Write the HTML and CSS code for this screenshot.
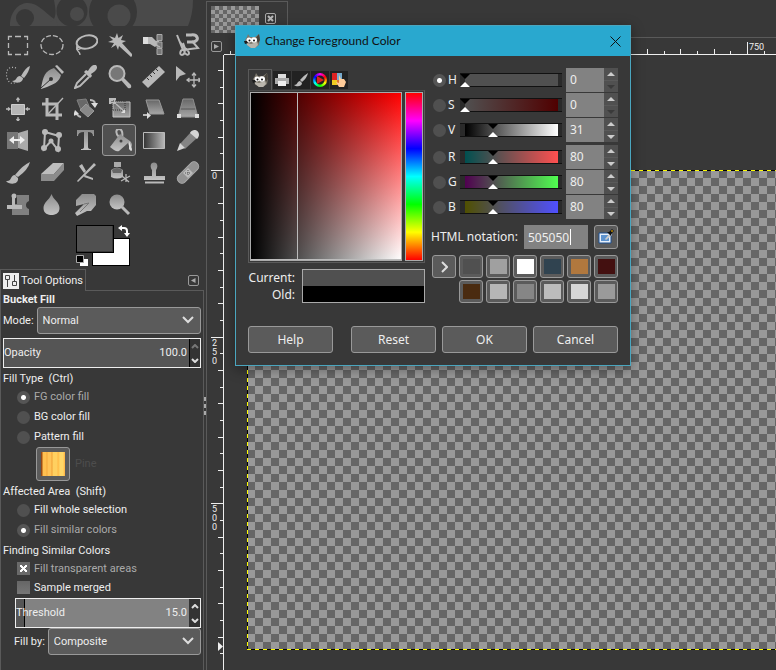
FILE: index.html
```html
<!DOCTYPE html>
<html lang="en">
<head>
    <meta charset="UTF-8">
    <meta name="viewport" content="width=device-width, initial-scale=1.0">
    <title>Image Editor</title>
    <link rel="stylesheet" href="styles.css">
</head>
<body>

<!-- shared gradients and symbols -->
<svg class="defs" width="0" height="0" aria-hidden="true">
    <defs>
        <linearGradient id="gv" x1="0" y1="0" x2="0" y2="1"><stop offset="0" stop-color="#8c8c8c"/><stop offset="1" stop-color="#c4c4c4"/></linearGradient>
        <linearGradient id="gd" x1="0" y1="0" x2="0" y2="1"><stop offset="0" stop-color="#676767"/><stop offset="1" stop-color="#a6a6a6"/></linearGradient>
        <linearGradient id="gh" x1="0" y1="0" x2="1" y2="0"><stop offset="0" stop-color="#333"/><stop offset="1" stop-color="#b8b8b8"/></linearGradient>
        <symbol id="wilber" viewBox="0 0 16 14">
            <path d="M1 6l2-3 1-3 2 3h5l4-3 1 6-1 5-4 3H7l-4-3z" fill="#7d786d"/>
            <path d="M12 4l3-4 1 6-2 3z" fill="#45423c"/>
            <path d="M3 9l4 1 6-2 1 3-3 3H7l-4-3z" fill="#b9b5ac"/>
            <ellipse cx="5" cy="6" rx="2.500" ry="2.500" fill="#fff"/><ellipse cx="10" cy="6" rx="3" ry="2.700" fill="#fff"/>
            <circle cx="5.500" cy="6.500" r="1" fill="#111"/><circle cx="10" cy="6.500" r="1" fill="#111"/>
            <path d="M0 7l3 0 1 2-3 1z" fill="#1c1c1c"/>
        </symbol>
    </defs>
</svg>

<aside class="dock">
    <svg class="banner" width="206" height="26" aria-hidden="true">
        <path d="M10 26C10 11 19 3 28 3c10 0 16 9 26 16 3-6 1-12 0-19h139q0 14-5 26z" fill="#4a4a4a"/>
        <circle cx="25" cy="18" r="9" fill="#383838"/>
        <path d="M50 22l6-3 2 7h-8z" fill="#4a4a4a"/>
        <circle cx="72" cy="11" r="15.500" fill="#383838"/><circle cx="77" cy="14" r="7" fill="#4a4a4a"/>
        <circle cx="113" cy="12" r="24" fill="#383838"/><circle cx="119" cy="16" r="11.500" fill="#4a4a4a"/>
    </svg>

    <div class="toolbox">
        <button class="tool" aria-label="Rectangle Select"><svg viewBox="0 0 24 24"><path d="M2.500 7V3.500H6M9 3.500h6M18 3.500h3.500V7M21.500 10v5M21.500 18v3.500H18M15 21.500H9M6 21.500H2.500V18M2.500 15v-5" class="l"/></svg></button>
        <button class="tool" aria-label="Ellipse Select"><svg viewBox="0 0 24 24"><ellipse cx="12" cy="12" rx="11" ry="9.500" class="l" fill="#303030" stroke-dasharray="5 2"/></svg></button>
        <button class="tool" aria-label="Free Select"><svg viewBox="0 0 24 24"><ellipse cx="13" cy="9" rx="10.500" ry="6.500" class="l2" transform="rotate(-12 13 9)"/><path d="M4 12c-3 3 0 5 2 4s-1-3-3-1 3 3 3 7" class="l"/></svg></button>
        <button class="tool" aria-label="Fuzzy Select"><svg viewBox="0 0 24 24"><path d="M9 0l1.500 5L15 2l-2 5 5 1-4 2 11 12-2 2-12-11-1 4-2-5-5 3 3-5-6-1 5-2-4-4 6 2z" class="f"/></svg></button>
        <button class="tool" aria-label="Select by Color"><svg viewBox="0 0 24 24"><path d="M1 4h9l4 4 3-1v4l-4 3-5-3H1z" class="f"/><path d="M1 4h5v7H1z" fill="#ddd"/><path d="M15 1.500h5v6h-5zM15 9h5v6h-5zM15 15.500h5v6h-5z" fill="#777" stroke="#aaa"/><path d="M10 10l8 4" class="l"/></svg></button>
        <button class="tool" aria-label="Scissors Select"><svg viewBox="0 0 24 24"><path d="M1 2l6 15L22 15l-6-7M8 17c-4-1-5 5-2 5s4-6 1-12M8 18c1 4 5 5 5 2s-6-5-9-11" class="l2"/><path d="M10 2h5c7-1 9 6 2 7h-6" class="l3"/></svg></button>

        <button class="tool" aria-label="Foreground Select"><svg viewBox="0 0 24 24"><path d="M10 3C2 0-1 7 1 13s7 7 9 3" class="l" stroke-dasharray="1 2"/><path d="M24 1q-4 1-9 10l3 2q5-6 6-12z" class="f"/><path d="M14 11c-4 0-3 5-8 5 4 3 11 2 11-3z" class="f"/></svg></button>
        <button class="tool" aria-label="Paths"><svg viewBox="0 0 24 24"><path d="M15 1l2-1 7 7-2 2z" class="f"/><path d="M14 3l7 7c-2 8-8 9-14 12l-6 2C3 11 5 6 14 3z" fill="url(#gv)"/><path d="M1 23l10-9" stroke="#333"/><circle cx="11" cy="14" r="2" fill="#333"/></svg></button>
        <button class="tool" aria-label="Color Picker"><svg viewBox="0 0 24 24"><path d="M12 9L3 18l-2 5 5-2 9-9" class="l2"/><path d="M10 7l2-2 2 1c2-4 5-7 8-6 3 3-1 7-5 9l1 2-2 2z" class="f"/></svg></button>
        <button class="tool" aria-label="Zoom"><svg viewBox="0 0 24 24"><path d="M13 15l2-3 8 8q1 4-3 3z" class="f"/><circle cx="9" cy="8.500" r="7.500" fill="#777" stroke="#b9b9b9" stroke-width="2"/></svg></button>
        <button class="tool" aria-label="Measure"><svg viewBox="0 0 24 24"><path d="M0 17L17 1l6 6L6 23z" class="f"/><path d="M5 13l2 2M8 10l2 2M11 7l2 2M14 4l2 2" stroke="#333"/></svg></button>
        <button class="tool" aria-label="Move"><svg viewBox="0 0 24 24"><path d="M0 1v15l4-5 6-2z" class="f"/><path d="M18 9v12M12 15h12M16 10.500l2-2.500 2 2.500M16 19.500l2 2.500 2-2.500M13.500 13L11 15l2.500 2M22.500 13l2 2-2 2" class="l"/></svg></button>

        <button class="tool" aria-label="Align"><svg viewBox="0 0 24 24"><path d="M5.500 7.500h13v10h-13z" fill="#b5b5b5" stroke="#ccc"/><path d="M12 1v4M12 20v4M0 12h4M20 12h4M10.500 3L12 1l1.500 2M10.500 22l1.500 2 1.500-2M2 10.500L4 12l-2 1.500M22 10.500L20 12l2 1.500" class="l"/></svg></button>
        <button class="tool" aria-label="Crop"><svg viewBox="0 0 24 24"><path d="M7 1v17h15M2 7h15v16" class="l3"/><path d="M8 17L23 1" class="l"/></svg></button>
        <button class="tool" aria-label="Rotate"><svg viewBox="0 0 24 24"><path d="M3 3l9-1 3 7-8 4z" fill="#686868" stroke="#808080"/><path d="M12 7l8 7-6 6-8-7z" fill="#888" stroke="#999"/><path d="M16 3q4 0 5 3M2 15q1 4 5 5" class="l2"/><path d="M17 6h7l-3 5zM-1 19l2-6 4 4z" fill="#ddd"/></svg></button>
        <button class="tool" aria-label="Scale"><svg viewBox="0 0 24 24"><path d="M5 5h17v15H5z" fill="url(#gd)" stroke="#c4c4c4"/><path d="M1 1h7v6H1z" fill="#bbb"/><path d="M4 13V4h13v9z" stroke="#333" stroke-dasharray="1 1" fill="none"/><path d="M8 7l9 8" class="l"/><path d="M17 12v4h-4z" fill="#ddd"/></svg></button>
        <button class="tool" aria-label="Shear"><svg viewBox="0 0 24 24"><path d="M4 3h13l5 14H8z" fill="url(#gd)" stroke="#999"/><path d="M1 18h6" class="l2"/><path d="M5 15v7l4-3.500z" fill="#ddd"/></svg></button>
        <button class="tool" aria-label="Perspective"><svg viewBox="0 0 24 24"><path d="M7 2h10l5 18H2z" fill="url(#gd)" stroke="#8d8d8d"/><path d="M5 12h14" stroke="#555"/><path d="M1 17h4v4H1zM19 17h4v4h-4z" fill="#ddd"/></svg></button>

        <button class="tool" aria-label="Flip"><svg viewBox="0 0 24 24"><path d="M1 3h11v17H1z" fill="#777"/><path d="M12 4l10-3v21l-10-3z" fill="#aaa"/><path d="M3 11l5-4v3h6V7l5 4-5 4v-3H8v3z" fill="#eee"/></svg></button>
        <button class="tool" aria-label="Cage Transform"><svg viewBox="0 0 24 24"><path d="M5 3l14 4-1 14-7-9-7 8z" class="l2"/><g class="f"><circle cx="5" cy="3" r="3"/><circle cx="19" cy="6" r="3"/><circle cx="18" cy="20" r="3"/><circle cx="11" cy="12" r="2.500"/><circle cx="4" cy="19" r="3"/></g></svg></button>
        <button class="tool" aria-label="Text"><svg viewBox="0 0 24 24"><path d="M3 1h17v6h-1q0-4-5-4v15q0 2 3 2v1H7v-1q3 0 3-2V3Q4 3 4 7H3z" fill="url(#gv)"/></svg></button>
        <button class="tool active" aria-label="Bucket Fill"><svg viewBox="0 0 24 24"><path d="M11 8c-4-4-3-8 0-8s4 4 3 9" class="l2"/><path d="M2 18L12 5l10 7c3 3 2 6 0 8l-2-6-9 8q-2 1-5-1z" fill="url(#gv)"/><path d="M21 12v8q3 4 3 0z" fill="#ddd"/><circle cx="13" cy="12" r="1.500" fill="#444"/></svg></button>
        <button class="tool" aria-label="Gradient"><svg viewBox="0 0 24 24"><path d="M1.500 3.500h21v16h-21z" fill="url(#gh)" stroke="#bbb"/></svg></button>
        <button class="tool" aria-label="Pencil"><svg viewBox="0 0 24 24"><path d="M4 15L15 3l6 6L9 20z" fill="#858585"/><path d="M4 14L1 22l8-3zM14 4c4-7 13 0 7 6z" fill="#d4d4d4"/></svg></button>

        <button class="tool" aria-label="Paintbrush"><svg viewBox="0 0 24 24"><path d="M24 1Q17 4 9 14l3 2Q22 9 24 1z" class="f"/><path d="M9 14c-5 0-3 7-9 6 3 4 13 4 12-3z" class="f"/></svg></button>
        <button class="tool" aria-label="Eraser"><svg viewBox="0 0 24 24"><path d="M1 13L13 2h11L14 13z" fill="#bdbdbd"/><path d="M1 13h13v7H1zM14 13L24 2v7L14 20z" fill="#8b8b8b"/></svg></button>
        <button class="tool" aria-label="Airbrush"><svg viewBox="0 0 24 24"><path d="M3 20L20 2l2 2L4 21zM5 5l3-2 4 7-2 2zM11 14l8 3v2l-9-3z" class="f"/></svg></button>
        <button class="tool" aria-label="Ink"><svg viewBox="0 0 24 24"><path d="M6 1h7v5H6z" fill="#aaa"/><path d="M3 9q6-5 12 0v7q-6 3-12 0z" fill="url(#gv)"/><path d="M4 9q5-4 10 0l-1 3H5z" fill="#666"/><path d="M13 20l9-5M14 15l7 6M18 13v8" class="l"/></svg></button>
        <button class="tool" aria-label="Clone"><svg viewBox="0 0 24 24"><path d="M10 9C4-1 20-1 14 9v6h9v4H2v-4h8z" fill="url(#gv)"/><path d="M3 21.500h19" class="l2"/></svg></button>
        <button class="tool" aria-label="Heal"><svg viewBox="0 0 24 24"><rect x="-1" y="7" width="26" height="9" rx="4" fill="#929292" stroke="#aaa" transform="rotate(-45 12 11.500)"/><path d="M12 7l5 5-5 5-5-5z" fill="#bbb"/><path d="M12 9v6M9 12h6" stroke="#555" stroke-dasharray="1 1"/></svg></button>

        <button class="tool" aria-label="Perspective Clone"><svg viewBox="0 0 24 24"><path d="M11 2h12v6q-3 1-3 4t3 4v6H6V11h5z" fill="#808080"/><path d="M6 3h3v9h7v4H1v-4h5z" class="f"/><circle cx="8" cy="3" r="2.500" class="f"/></svg></button>
        <button class="tool" aria-label="Blur"><svg viewBox="0 0 24 24"><path d="M11.500 1c2 6 8 8 8 14s-5 7-8 7-8-1-8-7 6-8 8-14z" fill="url(#gv)"/></svg></button>
        <button class="tool" aria-label="Smudge"><svg viewBox="0 0 24 24"><path d="M2 7l6-6h12l2 2v9l-5 6h-4L3 23l-2-3 9-9-8 2z" fill="url(#gv)"/><path d="M10 11l5-1-9 9" stroke="#777" fill="none"/></svg></button>
        <button class="tool" aria-label="Dodge / Burn"><svg viewBox="0 0 24 24"><circle cx="9" cy="9" r="7.500" fill="url(#gv)"/><path d="M14 14l7 7" class="l3"/></svg></button>
    </div>

    <div class="colors">
        <button class="swatch bg" aria-label="Background color"></button>
        <button class="swatch fg" aria-label="Foreground color"></button>
        <svg class="swap" width="12" height="12" viewBox="0 0 12 12"><path d="M3 3h3q3 0 3 3v2" fill="none" stroke="#fff" stroke-width="2"/><path d="M4 0v6L0 3zM6 8h6l-3 4z" fill="#fff"/></svg>
        <svg class="reset" width="12" height="12" viewBox="0 0 12 12"><path d="M4 4h8v7H4z" fill="#fff"/><path d="M.5.500h7v7h-7z" fill="#000" stroke="#aaa"/></svg>
    </div>

    <div class="tab-row">
        <button class="tab">
            <svg width="16" height="16" viewBox="0 0 16 16"><path d="M0 0h16v16H0z" fill="#eee"/><path d="M2.500 2.500h4v4h-4zM9.500 8.500h4v4h-4zM4.500 7v7M11.500 2v6" fill="none" stroke="#444"/></svg>
            Tool Options
        </button>
        <button class="tab-menu" aria-label="Configure this tab"><svg width="11" height="11" viewBox="0 0 11 11"><rect x=".5" y=".5" width="10" height="10" rx="1.500" fill="none" stroke="#999"/><path d="M7.500 3v5L3 5.500z" fill="#aaa"/></svg></button>
    </div>

    <form class="options">
        <h2>Bucket Fill</h2>
        <div class="row">
            <label for="mode">Mode:</label>
            <div class="select">
                <select id="mode"><option>Normal</option></select>
                <svg width="12" height="8" viewBox="0 0 12 8"><path d="M1 1l5 5 5-5" class="chev"/></svg>
            </div>
        </div>
        <div class="scale opacity">
            <label for="opacity">Opacity</label>
            <input id="opacity" type="text" value="100.0">
            <div class="steps">
                <button type="button" aria-label="Increase" disabled><svg width="8" height="5" viewBox="0 0 8 5"><path d="M1 4l3-3 3 3" class="chev"/></svg></button>
                <button type="button" aria-label="Decrease"><svg width="8" height="5" viewBox="0 0 8 5"><path d="M1 1l3 3 3-3" class="chev"/></svg></button>
            </div>
        </div>

        <h3>Fill Type&nbsp; (Ctrl)</h3>
        <label class="choice on"><input type="radio" name="fill" checked>FG color fill</label>
        <label class="choice"><input type="radio" name="fill">BG color fill</label>
        <label class="choice"><input type="radio" name="fill">Pattern fill</label>
        <div class="pattern">
            <button type="button" aria-label="Pattern"><span class="pine"></span></button>
            <span>Pine</span>
        </div>

        <h3>Affected Area&nbsp; (Shift)</h3>
        <label class="choice"><input type="radio" name="area">Fill whole selection</label>
        <label class="choice on"><input type="radio" name="area" checked>Fill similar colors</label>

        <h3 class="finding">Finding Similar Colors</h3>
        <label class="choice check on"><input type="checkbox" checked>Fill transparent areas</label>
        <label class="choice check"><input type="checkbox">Sample merged</label>
        <div class="scale threshold">
            <label for="threshold">Threshold</label>
            <input id="threshold" type="text" value="15.0">
            <div class="steps">
                <button type="button" aria-label="Increase"><svg width="8" height="5" viewBox="0 0 8 5"><path d="M1 4l3-3 3 3" class="chev"/></svg></button>
                <button type="button" aria-label="Decrease"><svg width="8" height="5" viewBox="0 0 8 5"><path d="M1 1l3 3 3-3" class="chev"/></svg></button>
            </div>
        </div>
        <div class="row fill-by">
            <label for="fillby">Fill by:</label>
            <div class="select">
                <select id="fillby"><option>Composite</option></select>
                <svg width="12" height="8" viewBox="0 0 12 8"><path d="M1 1l5 5 5-5" class="chev"/></svg>
            </div>
        </div>
    </form>
    <div class="grip"><i></i><i></i><i></i></div>
</aside>

<main class="window">
    <div class="image-tabs">
        <div class="image-tab">
            <div class="thumb"></div>
            <button aria-label="Close image"><svg width="11" height="11" viewBox="0 0 11 11"><rect x=".5" y=".5" width="10" height="10" rx="1.500" fill="none" stroke="#aaa"/><path d="M3 3l5 5M8 3L3 8" stroke="#bbb" stroke-width="2"/></svg></button>
        </div>
    </div>
    <div class="workspace">
        <button class="corner" aria-label="Image menu"><svg width="11" height="11" viewBox="0 0 11 11"><rect x=".5" y=".5" width="10" height="10" rx="1.500" fill="none" stroke="#999"/><path d="M3 3v5l5-2.500z" fill="#aaa"/></svg></button>
        <svg class="ruler-h" id="rulerH"></svg>
        <svg class="ruler-v" id="rulerV"></svg>
        <div class="view"><div class="canvas"></div></div>
    </div>
</main>

<section class="dialog" role="dialog" aria-labelledby="dialogTitle">
    <header>
        <svg width="16" height="14"><use href="#wilber"/></svg>
        <h1 id="dialogTitle">Change Foreground Color</h1>
        <button aria-label="Close"><svg width="11" height="11" viewBox="0 0 11 11"><path d="M.5.500l10 10M10.500.500l-10 10" stroke="#111"/></svg></button>
    </header>
    <div class="dialog-body">
        <div class="picker">
            <div class="picker-tabs">
                <button class="current" aria-label="GIMP"><svg width="16" height="14"><use href="#wilber"/></svg></button>
                <button aria-label="CMYK"><svg width="14" height="14" viewBox="0 0 14 14"><path d="M3 1h8v4H3z" fill="#ddd"/><path d="M0 5h14v6H0z" fill="#aaa"/><path d="M3 8h8v5H3z" fill="#eee"/></svg></button>
                <button aria-label="Watercolor"><svg width="14" height="14" viewBox="0 0 14 14"><path d="M14 0Q9 3 6 7l2 2q5-4 6-9zM6 8c-3 0-2 4-6 4 2 2 8 2 8-2z" fill="#bbb"/></svg></button>
                <button aria-label="Wheel"><span class="wheel"><svg width="8" height="8" viewBox="0 0 8 8"><path d="M1 0v8l7-4z" fill="#d22"/></svg></span></button>
                <button aria-label="Palette"><svg width="14" height="14" viewBox="0 0 14 14"><path d="M0 0h5v7H0z" fill="#d22"/><path d="M5 0h5v7H5z" fill="#7ac"/><path d="M0 7h5v5H0z" fill="#ec2"/><path d="M5 7h5v5H5z" fill="#d73"/><path d="M7 2l2 4 3 0 2 3-2 5H7L4 9l3 1z" fill="#fc9"/></svg></button>
            </div>
            <div class="picker-page">
                <div class="sv"></div>
                <div class="hue"></div>
            </div>
            <div class="compare">
                <div class="compare-labels"><span>Current:</span><span>Old:</span></div>
                <div class="compare-box"></div>
            </div>
        </div>

        <div class="channels">
            <div class="channel h at-0"><label><input type="radio" name="ch" checked>H</label><div class="slider"><span class="bar"></span></div><div class="spin"><input type="text" value="0" aria-label="H"><button aria-label="Up"></button><button disabled aria-label="Down"></button></div></div>
            <div class="channel s at-0"><label><input type="radio" name="ch">S</label><div class="slider"><span class="bar"></span></div><div class="spin"><input type="text" value="0" aria-label="S"><button aria-label="Up"></button><button disabled aria-label="Down"></button></div></div>
            <div class="channel v"><label><input type="radio" name="ch">V</label><div class="slider"><span class="bar"></span></div><div class="spin"><input type="text" value="31" aria-label="V"><button aria-label="Up"></button><button aria-label="Down"></button></div></div>
            <div class="channel r"><label><input type="radio" name="ch">R</label><div class="slider"><span class="bar"></span></div><div class="spin"><input type="text" value="80" aria-label="R"><button aria-label="Up"></button><button aria-label="Down"></button></div></div>
            <div class="channel g"><label><input type="radio" name="ch">G</label><div class="slider"><span class="bar"></span></div><div class="spin"><input type="text" value="80" aria-label="G"><button aria-label="Up"></button><button aria-label="Down"></button></div></div>
            <div class="channel b"><label><input type="radio" name="ch">B</label><div class="slider"><span class="bar"></span></div><div class="spin"><input type="text" value="80" aria-label="B"><button aria-label="Up"></button><button aria-label="Down"></button></div></div>

            <div class="html-row">
                <label for="hex">HTML notation:</label>
                <div class="hex"><input id="hex" type="text" value="505050" size="6"></div>
                <button class="btn" aria-label="Pick color"><svg width="16" height="16" viewBox="0 0 16 16"><path d="M1 4h12v10H1z" fill="#e8f0fa" stroke="#1b4f91"/><path d="M3 6h8v6H3z" fill="#5d93cf"/><path d="M7 10l5-6 2 2-6 5z" fill="#ccc"/><path d="M9 3h2l3-3 2 2-3 3v2z" fill="#111"/><circle cx="14" cy="2" r="1" fill="#b80"/></svg></button>
            </div>

            <div class="history">
                <button class="btn" aria-label="Add color"><svg width="7" height="12" viewBox="0 0 7 12"><path d="M1 1l5 5-5 5" class="chev"/></svg></button>
                <button class="btn c1" aria-label="#505050"><i></i></button>
                <button class="btn c2" aria-label="#a0a0a0"><i></i></button>
                <button class="btn c3" aria-label="#ffffff"><i></i></button>
                <button class="btn c4" aria-label="#304350"><i></i></button>
                <button class="btn c5" aria-label="#b1783e"><i></i></button>
                <button class="btn c6" aria-label="#431010"><i></i></button>
                <button class="btn c7" aria-label="#4a2b10"><i></i></button>
                <button class="btn c8" aria-label="#b6b6b6"><i></i></button>
                <button class="btn c9" aria-label="#868686"><i></i></button>
                <button class="btn c10" aria-label="#bcbcbc"><i></i></button>
                <button class="btn c11" aria-label="#d6d6d6"><i></i></button>
                <button class="btn c12" aria-label="#9a9a9a"><i></i></button>
            </div>
        </div>
    </div>
    <footer>
        <button class="btn help">Help</button>
        <button class="btn">Reset</button>
        <button class="btn">OK</button>
        <button class="btn">Cancel</button>
    </footer>
</section>

<script>
// one tick every 25 image pixels, a labelled one every 250
const zoom = 2 / 3;

function add(svg, name, attrs, text) {
    const el = document.createElementNS("http://www.w3.org/2000/svg", name);
    for (const key in attrs) el.setAttribute(key, attrs[key]);
    if (text) el.textContent = text;
    svg.appendChild(el);
}

function drawRuler(id, origin, size, vertical) {
    const svg = document.getElementById(id);
    const box = svg.getBoundingClientRect();
    const end = vertical ? box.height : box.width;
    for (let i = -6; ; i++) {
        const pos = Math.round(origin + i * 25 * zoom);
        if (pos < 0) continue;
        if (pos > end) break;
        const major = i % 10 === 0;
        const len = major ? 12 : i % 2 === 0 ? 5 : 3;
        if (vertical) {
            add(svg, "rect", { x: size - len, y: pos, width: len, height: 1 });
        } else {
            add(svg, "rect", { x: pos, y: size - len, width: 1, height: len });
        }
        if (!major || pos > end - 24) continue;
        const label = String(i * 25);
        if (vertical) {
            [...label].forEach((c, n) => add(svg, "text", { x: 2, y: pos + 9 + n * 9 }, c));
        } else {
            add(svg, "text", { x: pos + 2, y: 9 }, label);
        }
    }
    if (vertical) {
        add(svg, "path", { d: "M" + (size - 5) + " 587l5 4.500-5 4.500z" });
    }
}

drawRuler("rulerH", 20, 13, false);
drawRuler("rulerV", 115, 13, true);
</script>

</body>
</html>
```

FILE: styles.css
```css
* {
    box-sizing: border-box;
}
body {
    margin: 0;
    display: flex;
    height: 100vh;
    overflow: hidden;
    background: #383838;
    color: #eee;
    font-family: Roboto, sans-serif;
    font-size: 11px;
    line-height: 16px;
}
button, input, select {
    margin: 0;
    padding: 0;
    border: none;
    background: none;
    color: inherit;
    font: inherit;
}
h1, h2, h3 {
    margin: 0;
    font-size: 11px;
    font-weight: normal;
}
svg {
    display: block;
}
.defs {
    position: absolute;
}
.chev {
    fill: none;
    stroke: #ddd;
    stroke-width: 2;
}

/* dock */
.dock {
    position: relative;
    flex: none;
    display: flex;
    flex-direction: column;
    width: 206px;
}
.banner {
    flex: none;
}
.toolbox {
    display: grid;
    grid-template-columns: repeat(6, 34px);
    grid-auto-rows: 32px;
    margin-top: 2px;
}
.tool {
    display: flex;
    align-items: center;
    justify-content: center;
    padding: 2px 0 0 2px;
    border: 1px solid transparent;
    border-radius: 3px;
}
.tool svg {
    width: 24px;
    height: 24px;
}
.tool.active {
    border-color: #999;
    background: #505050;
}
.l, .l2, .l3 {
    fill: none;
    stroke: #b9b9b9;
    stroke-width: 1.3;
}
.l2 {
    stroke-width: 2;
}
.l3 {
    stroke-width: 3;
}
.f {
    fill: #b9b9b9;
}
.colors {
    position: relative;
    width: 54px;
    height: 42px;
    margin: 5px 0 2px 76px;
}
.swatch, .swap, .reset {
    position: absolute;
}
.swatch {
    width: 38px;
    height: 28px;
    border: 1px solid #000;
}
.fg {
    left: 0;
    top: 0;
    background: #505050;
    box-shadow: inset -1px -1px #383838;
}
.bg {
    right: 0;
    bottom: 1px;
    background: #fff;
}
.swap {
    right: 0;
    top: 0;
}
.reset {
    left: 0;
    bottom: 0;
}
.tab-row {
    display: flex;
    justify-content: space-between;
    align-items: center;
    height: 22px;
    margin: 0 2px 0 0;
    background: linear-gradient(#5a5a5a, #5a5a5a) bottom / 100% 1px no-repeat;
}
.tab {
    display: flex;
    align-items: center;
    gap: 2px;
    width: 86px;
    height: 22px;
    padding-left: 2px;
    border: 1px solid #5a5a5a;
    border-bottom: none;
    background: #383838;
    white-space: nowrap;
}
.tab-menu {
    margin-right: 5px;
}
.options {
    flex: 1;
    display: flex;
    flex-direction: column;
    margin-right: 2px;
    padding: 2px 2px 0;
    border: 1px solid #5a5a5a;
    border-width: 0 1px;
}
.options h2 {
    font-weight: bold;
    line-height: 14px;
}
.row {
    display: flex;
    align-items: center;
    gap: 3px;
}
.select {
    position: relative;
    flex: 1;
}
.select select {
    appearance: none;
    width: 100%;
    height: 27px;
    padding: 0 5px;
    border: 1px solid #999;
    border-radius: 3px;
    background: #5b5b5b;
}
.select svg {
    position: absolute;
    right: 7px;
    top: 9px;
    pointer-events: none;
}
.scale {
    display: flex;
    align-items: center;
    height: 30px;
    border: 1px solid #eee;
    background: #555;
}
.scale input {
    flex: 1;
    min-width: 0;
    text-align: right;
    padding-right: 2px;
}
.steps {
    display: flex;
    flex-direction: column;
    align-self: stretch;
    width: 11px;
    background: #333;
}
.steps button {
    flex: 1;
    display: flex;
    align-items: center;
    justify-content: center;
}
.steps button:disabled {
    opacity: 0.4;
}
.opacity {
    margin: 4px 0 3px;
}
.opacity .steps {
    border-left: 1px solid #000;
}
.threshold {
    margin: 1px 0 0 12px;
    background: linear-gradient(to right, #555 8px, #000 8px 9px, #828282 9px);
}
.options h3 {
    line-height: 16px;
}
.options .finding {
    margin-top: 3px;
}
.choice {
    display: flex;
    align-items: center;
    gap: 4px;
    height: 20px;
    padding-left: 14px;
}
.choice.check {
    height: 19px;
}
.choice.on {
    color: #aaa;
}
input[type=radio] {
    appearance: none;
    width: 13px;
    height: 13px;
    border-radius: 50%;
    background: #505050;
}
input[type=radio]:checked {
    background: radial-gradient(circle, #fff 2px, #555 3px);
}
input[type=checkbox] {
    appearance: none;
    width: 13px;
    height: 13px;
    background: linear-gradient(#666, #777);
}
input[type=checkbox]:checked {
    background:
        linear-gradient(45deg, transparent 42%, #fff 42% 58%, transparent 58%) center / 7px 7px no-repeat,
        linear-gradient(-45deg, transparent 42%, #fff 42% 58%, transparent 58%) center / 7px 7px no-repeat,
        #6a6a6a;
}
.pattern {
    display: flex;
    align-items: center;
    gap: 5px;
    padding-left: 33px;
    margin-bottom: 3px;
    color: #4d4d4d;
}
.pattern button {
    width: 34px;
    height: 34px;
    padding: 4px;
    border: 1px solid #999;
    border-radius: 3px;
    background: #5b5b5b;
}
.pine {
    display: block;
    height: 24px;
    background: linear-gradient(to right, #9a4a14 1px, #ffc050 2px 5px, #f5a83a 6px, #ffc458 7px 10px, #ef9f35 11px, #ffd060 12px 16px, #ffb945 17px, #ffd768 19px 22px, #ffb040);
}
.fill-by {
    padding-left: 11px;
}
.grip {
    position: absolute;
    right: 0;
    top: 397px;
    display: grid;
    gap: 3px;
}
.grip i {
    width: 2px;
    height: 4px;
    background: #aaa;
}

/* image window */
.window {
    flex: 1;
    min-width: 0;
    display: flex;
    flex-direction: column;
    margin-top: 1px;
    border-left: 1px solid #5a5a5a;
}
.image-tabs {
    height: 37px;
    background: linear-gradient(#5a5a5a, #5a5a5a) bottom / 100% 1px no-repeat;
}
.image-tab {
    display: flex;
    gap: 6px;
    width: 81px;
    height: 37px;
    padding: 4px;
    border: 1px solid #5a5a5a;
    border-width: 1px 1px 0 0;
    background: #383838;
}
.image-tab button {
    height: 11px;
    margin-top: 7px;
}
.thumb {
    width: 48px;
    height: 27px;
    background: repeating-conic-gradient(#999 0 25%, #666 0 50%) 0 0 / 8px 8px;
}
.workspace {
    flex: 1;
    min-height: 0;
    display: grid;
    grid-template-columns: 17px 1fr;
    grid-template-rows: 17px 1fr;
}
.corner {
    padding: 3px 2px 3px 4px;
}
.ruler-h {
    width: 100%;
    height: 14px;
    margin-top: 3px;
    padding-left: 3px;
    border-bottom: 1px solid #eee;
}
.ruler-v {
    width: 14px;
    height: 100%;
    margin-left: 3px;
    border-right: 1px solid #eee;
}
.ruler-h, .ruler-v {
    fill: #eee;
    font-size: 9px;
    line-height: 9px;
    overflow: hidden;
}
.view {
    padding: 115px 0 20px 23px;
}
.canvas {
    height: 100%;
    background:
        repeating-linear-gradient(to right, #ff0 0 4px, #000 4px 8px) top / 100% 1px no-repeat,
        repeating-linear-gradient(to right, #ff0 0 4px, #000 4px 8px) bottom / 100% 1px no-repeat,
        repeating-linear-gradient(#ff0 0 4px, #000 4px 8px) left / 1px 100% no-repeat,
        repeating-conic-gradient(#666 0 25%, #999 0 50%) 0 0 / 16px 16px;
}

/* color dialog */
.dialog {
    position: absolute;
    left: 235px;
    top: 25px;
    width: 396px;
    border: 1px solid #4aa6bf;
    background: #383838;
    box-shadow: 0 3px 12px rgba(0, 0, 0, 0.4);
    font-family: "Noto Sans", sans-serif;
    font-size: 12px;
}
.dialog header {
    display: flex;
    align-items: center;
    gap: 5px;
    height: 30px;
    padding: 0 9px 0 8px;
    background: #29a8cf;
    color: #111;
}
.dialog h1 {
    flex: 1;
    font-family: Lato, sans-serif;
    font-size: 12px;
}
.dialog-body {
    display: flex;
    gap: 6px;
    padding: 12px 12px 0;
}
.picker {
    width: 177px;
}
.picker-tabs {
    display: flex;
    align-items: flex-end;
    gap: 1px;
    height: 22px;
}
.picker-tabs button {
    display: flex;
    align-items: center;
    justify-content: center;
    width: 18px;
    height: 18px;
    margin-bottom: 1px;
    background: #222;
}
.picker-tabs .current {
    width: 24px;
    height: 21px;
    margin: 0;
    border: 1px solid #5a5a5a;
    border-bottom: none;
    background: #383838;
}
.wheel {
    display: flex;
    padding: 3px;
    border-radius: 50%;
    background:
        radial-gradient(circle, #222 4px, transparent 5px),
        conic-gradient(#f0f, #f00, #ff0, #0f0, #0ff, #00f, #f0f);
}
.picker-page {
    display: flex;
    gap: 3px;
    height: 173px;
    padding: 1px;
    border: 1px solid #5a5a5a;
    border-top-color: #4a4a4a;
}
.sv {
    flex: 1;
    border: 1px solid #aaa;
    background:
        linear-gradient(#bbb, #bbb) 46px 0 / 1px 100% no-repeat,
        linear-gradient(#bbb, #bbb) 0 100% / 100% 1px no-repeat,
        linear-gradient(to right, #000, transparent),
        linear-gradient(#f00, #fff);
}
.hue {
    width: 18px;
    border: 1px solid #aaa;
    background: linear-gradient(#f00, #f0f, #00f, #0ff, #0f0, #ff0, #f00);
}
.compare {
    display: flex;
    gap: 7px;
    margin-top: 6px;
}
.compare-labels {
    display: flex;
    flex-direction: column;
    width: 47px;
    text-align: right;
    line-height: 17px;
}
.compare-box {
    flex: 1;
    height: 34px;
    border: 1px solid #aaa;
    background: linear-gradient(#505050 50%, #000 50%);
}
.channels {
    flex: 1;
}
.channel {
    display: flex;
    align-items: center;
    height: 24px;
    margin-bottom: 1px;
}
.channel.v {
    margin-bottom: 3px;
}
.channel label {
    display: flex;
    align-items: center;
    gap: 2px;
    width: 29px;
    padding-left: 2px;
}
.slider {
    position: relative;
    flex: 1;
    height: 14px;
    padding: 0 4px 0 5px;
    border: 1px solid #111;
    border-width: 1px 0;
    background: #2a2a2a;
}
.bar {
    display: block;
    height: 12px;
}
.slider::before, .slider::after {
    content: "";
    position: absolute;
    left: 28px;
    border: 5px solid transparent;
}
.slider::before {
    top: 0;
    border-top-color: #000;
    border-bottom: none;
}
.slider::after {
    bottom: -1px;
    border-bottom-color: #fff;
    border-top: none;
}
.at-0 .slider::before, .at-0 .slider::after {
    left: 0;
}
.h .bar { background: #505050; }
.s .bar { background: linear-gradient(to right, #505050, #500000); }
.v .bar { background: linear-gradient(to right, #000, #fff); }
.r .bar { background: linear-gradient(to right, #005050, #ff5050); }
.g .bar { background: linear-gradient(to right, #500050, #50ff50); }
.b .bar { background: linear-gradient(to right, #505000, #5050ff); }
.spin {
    display: grid;
    grid-template-columns: 1fr 14px;
    grid-template-rows: 1fr 1fr;
    width: 52px;
    height: 24px;
    margin-left: 4px;
    background: #505050;
}
.spin input {
    grid-row: 1 / 3;
    min-width: 0;
    padding-left: 4px;
    background: #828282;
}
.spin button {
    display: flex;
    align-items: center;
    justify-content: center;
}
.spin button::after {
    content: "";
    border: 4px solid transparent;
    border-top: none;
    border-bottom-color: #ccc;
}
.spin button:last-child {
    border-top: 1px solid #5a5a5a;
}
.spin button:last-child::after {
    border-top: 4px solid #ccc;
    border-bottom: none;
}
.spin button:disabled:last-child::after {
    border-top-color: #3a3a3a;
}
.btn {
    display: flex;
    align-items: center;
    justify-content: center;
    border: 1px solid #999;
    border-radius: 3px;
    background: #5b5b5b;
}
.html-row {
    display: flex;
    align-items: center;
    justify-content: space-between;
    margin-top: 6px;
}
.html-row .btn {
    width: 24px;
    height: 24px;
}
.hex {
    width: 64px;
    height: 24px;
    padding-left: 4px;
    background: linear-gradient(#fff, #fff) 46px 4px / 1px 16px no-repeat #828282;
}
.hex input {
    width: 100%;
    height: 24px;
}
.history {
    display: grid;
    grid-template-columns: 24px 24px 24px 24px 24px 24px 24px;
    justify-content: end;
    gap: 2px 3px;
    margin-top: 6px;
}
.history .btn {
    height: 23px;
}
.history i {
    width: 17px;
    height: 15px;
}
.c1 i { background: #505050; }
.c2 i { background: #a0a0a0; }
.c3 i { background: #fff; }
.c4 i { background: #304350; }
.c5 i { background: #b1783e; }
.c6 i { background: #431010; }
.c7 i { background: #4a2b10; }
.c8 i { background: #b6b6b6; }
.c9 i { background: #868686; }
.c10 i { background: #bcbcbc; }
.c11 i { background: #d6d6d6; }
.c12 i { background: #9a9a9a; }
.history .c7 {
    grid-column: 2;
}
.dialog footer {
    display: flex;
    gap: 6px;
    padding: 23px 12px 12px;
}
.dialog footer .btn {
    flex: 1;
    height: 27px;
}
.dialog footer .help {
    margin-right: 12px;
}
```
